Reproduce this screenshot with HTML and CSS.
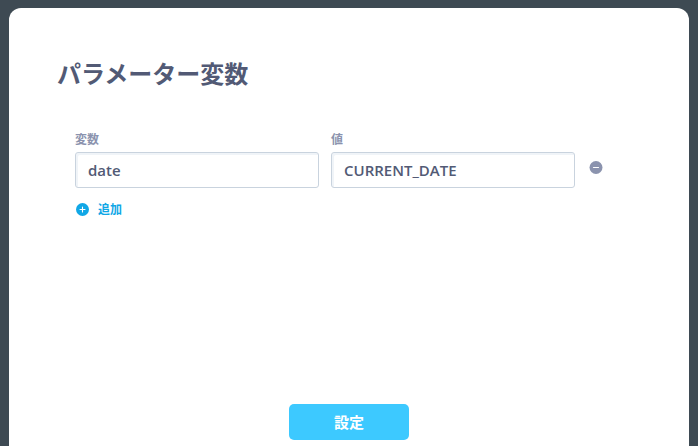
FILE: index.html
```html
<!DOCTYPE html>
<html lang="ja">
<head>
  <meta charset="utf-8">
  <title>パラメーター変数</title>
  <link rel="stylesheet" href="styles.css">
</head>
<body>
  <div class="modal">
    <h2 class="modal-title">パラメーター変数</h2>

    <div class="params">
      <div class="param-row">
        <label class="field">
          <span class="field-label">変数</span>
          <input class="field-input" type="text" value="date">
        </label>
        <label class="field">
          <span class="field-label">値</span>
          <input class="field-input" type="text" value="CURRENT_DATE">
        </label>
        <button class="remove" type="button" aria-label="削除">
          <svg width="14" height="13" viewBox="0 0 14 13">
            <circle cx="7" cy="6.5" r="6.5" fill="#8b93ae"/>
            <path d="M4.5 6.5h5" stroke="#fff" stroke-width="1.2" stroke-linecap="round"/>
          </svg>
        </button>
      </div>

      <button class="add" type="button">
        <svg width="13" height="13" viewBox="0 0 13 13">
          <circle cx="6.5" cy="6.5" r="6.5" fill="#10a7e6"/>
          <path d="M4 6.5h5M6.5 4v5" stroke="#fff" stroke-width="1.1" stroke-linecap="round"/>
        </svg>
        <span class="add-text">追加</span>
      </button>
    </div>

    <div class="modal-footer">
      <button class="submit" type="button">設定</button>
    </div>
  </div>
</body>
</html>
```
FILE: styles.css
```css
* {
  box-sizing: border-box;
}

body {
  margin: 0;
  height: 446px;
  padding: 8px 9px 0;
  overflow: hidden;
  background: #3e4a53;
  color: #525a75;
  font-family: "Open Sans", "Noto Sans CJK JP", sans-serif;
}

button {
  padding: 0;
  border: none;
  background: none;
  font-family: inherit;
}

svg {
  display: block;
}

.modal {
  display: flex;
  flex-direction: column;
  height: 438px;
  padding: 48px 48px 6px;
  border-radius: 12px 12px 0 0;
  background: #fff;
}

.modal-title {
  margin: 0;
  font-size: 24px;
  line-height: 36px;
  font-weight: 700;
}

.params {
  padding: 30px 18px 0;
}

.param-row {
  display: flex;
  gap: 12px;
}

.field {
  width: 244px;
}

.field-label {
  display: block;
  height: 18px;
  margin-top: 9px;
  margin-bottom: 3px;
  color: #8b93ae;
  font-size: 12px;
  line-height: 18px;
  font-weight: 700;
}

.field-input {
  display: block;
  width: 100%;
  height: 36px;
  padding: 0 12px;
  border: 1px solid #c9d3de;
  border-radius: 3px;
  box-shadow: inset 2px 2px 0 #f0f4f8;
  background: #fff;
  color: #525a75;
  font-family: inherit;
  font-size: 15px;
  font-weight: 600;
}

.remove {
  align-self: flex-start;
  margin: 39px 0 0 2px;
}

.add {
  display: flex;
  align-items: center;
  gap: 9px;
  margin: 12px 0 0 1px;
  color: #10a7e6;
  font-size: 12px;
  line-height: 18px;
  font-weight: 700;
}

.add-text {
  padding-top: 1px;
}

.modal-footer {
  display: flex;
  justify-content: center;
  margin-top: auto;
}

.submit {
  width: 120px;
  height: 36px;
  padding-bottom: 2px;
  border-radius: 5px;
  background: #3dc9ff;
  color: #fff;
  font-size: 15px;
  font-weight: 700;
}
```
